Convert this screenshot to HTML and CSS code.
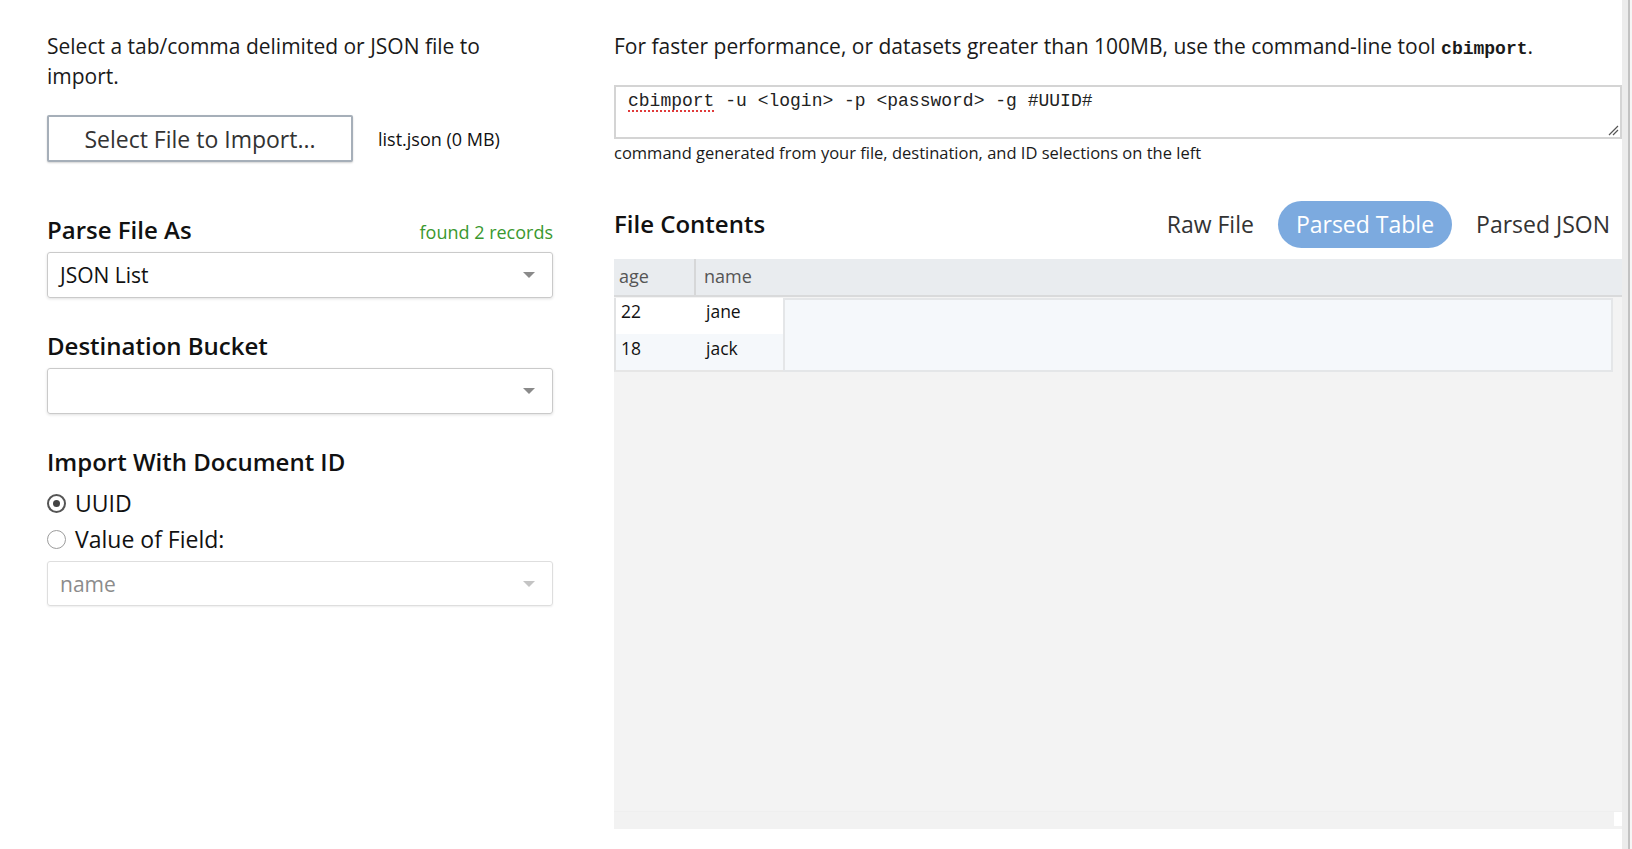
FILE: index.html
```html
<!DOCTYPE html>
<html lang="en">
<head>
<meta charset="utf-8">
<title>Import</title>
<link rel="stylesheet" href="styles.css">
</head>
<body>
<div class="page">
  <div class="main">
    <section class="left">
      <p class="intro">Select a tab/comma delimited or JSON file to import.</p>
      <div class="file-row">
        <button class="file-btn">Select File to Import...</button>
        <span class="file-name">list.json (0 MB)</span>
      </div>

      <div class="field-head first">
        <h3>Parse File As</h3>
        <span class="found">found 2 records</span>
      </div>
      <div class="select"><span>JSON List</span><span class="caret"></span></div>

      <div class="field-head">
        <h3>Destination Bucket</h3>
      </div>
      <div class="select"><span></span><span class="caret"></span></div>

      <div class="field-head">
        <h3>Import With Document ID</h3>
      </div>
      <div class="radios">
        <label class="radio"><span class="dot checked"></span>UUID</label>
        <label class="radio"><span class="dot"></span>Value of Field:</label>
      </div>
      <div class="select disabled"><span>name</span><span class="caret"></span></div>
    </section>

    <section class="right">
      <p class="perf">For faster performance, or datasets greater than 100MB, use the command-line tool <code class="tool">cbimport</code>.</p>
      <div class="cmd"><span class="cmd-text"><span class="spell">cbimport</span> -u &lt;login&gt; -p &lt;password&gt; -g #UUID#</span><svg class="grip" width="12" height="12" viewBox="0 0 12 12"><path d="M11 2 L2 11 M11 6 L6 11" stroke="#555" stroke-width="1.2" fill="none"/></svg></div>
      <div class="caption">command generated from your file, destination, and ID selections on the left</div>

      <div class="contents-head">
        <h3>File Contents</h3>
        <div class="tabs">
          <span class="tab">Raw File</span>
          <span class="tab active">Parsed Table</span>
          <span class="tab">Parsed JSON</span>
        </div>
      </div>

      <div class="grid">
        <div class="grid-header">
          <div class="hcell age">age</div>
          <div class="hcell name">name</div>
        </div>
        <div class="grid-body">
          <div class="rows">
            <div class="row"><div class="cell age">22</div><div class="cell name">jane</div></div>
            <div class="row alt"><div class="cell age">18</div><div class="cell name">jack</div></div>
          </div>
          <div class="filler"></div>
        </div>
        <div class="grid-space"></div>
        <div class="hscroll"><span class="corner"></span></div>
      </div>
    </section>
  </div>
  <div class="vscroll"></div>
</div>
</body>
</html>
```

FILE: styles.css
```css
* { box-sizing: border-box; }
html, body { margin: 0; padding: 0; background: #fff; }
body {
  font-family: "Open Sans", "Noto Sans", sans-serif;
  color: #1a1a1a;
}
.page { display: flex; width: 1632px; height: 849px; overflow: hidden; }
.main {
  flex: 1;
  display: flex;
  gap: 61px;
  padding: 31px 0 0 47px;
}
.left { width: 506px; flex: none; }
.right { flex: 1; display: flex; flex-direction: column; min-width: 0; }

.intro { margin: 0; font-size: 21px; line-height: 30px; max-width: 486px; }

.file-row { display: flex; align-items: center; gap: 25px; margin-top: 24px; }
.file-btn {
  width: 306px; height: 47px;
  border: 2px solid #a6afb9; border-radius: 2px;
  background: #fff;
  box-shadow: 0 1px 2px rgba(0,0,0,0.18);
  font-family: "Open Sans", sans-serif; font-size: 23px; color: #333;
  padding: 0;
}
.file-name { font-size: 18px; color: #111; }

h3 { margin: 0; font-size: 24px; font-weight: 600; color: #111; }
.field-head {
  display: flex; justify-content: space-between; align-items: baseline;
  height: 30px; line-height: 30px; margin-top: 33px; margin-bottom: 7px;
}
.field-head.first { margin-top: 53px; }
.found { color: #3a982f; font-size: 18px; }

.select {
  height: 46px;
  border: 1px solid #cacaca; border-radius: 3px;
  box-shadow: 0 1px 3px rgba(0,0,0,0.12);
  display: flex; align-items: center; justify-content: space-between;
  padding: 0 17px 0 12px;
  font-size: 21px; color: #111;
}
.caret {
  width: 0; height: 0;
  border-left: 6px solid transparent; border-right: 6px solid transparent;
  border-top: 6px solid #8a8a8a;
}
.select.disabled { height: 45px; margin-top: 4px; color: #8c8c8c; border-color: #dedede; box-shadow: 0 1px 2px rgba(0,0,0,0.07); }
.select.disabled .caret { border-top-color: #c4c4c4; }

.radios { margin-top: 8px; }
.radio { display: flex; align-items: center; gap: 9px; height: 36px; font-size: 23px; color: #111; }
.dot {
  width: 19px; height: 19px; border-radius: 50%; flex: none;
  border: 1.5px solid #9c9c9c; background: #fff;
  display: inline-flex; align-items: center; justify-content: center;
}
.dot.checked { border: 2px solid #555; }
.dot.checked::after { content: ""; width: 7px; height: 7px; border-radius: 50%; background: #444; }

.perf { margin: 0; font-size: 21px; line-height: 30px; height: 30px; }
.tool { font-family: "Liberation Mono", "DejaVu Sans Mono", monospace; font-weight: 700; font-size: 18px; line-height: 1; }

.cmd {
  position: relative;
  margin-top: 24px; height: 54px;
  border: 2px solid #d4d4d4;
  padding: 3px 12px 0;
  font-family: "Liberation Mono", "DejaVu Sans Mono", monospace; font-size: 18px; line-height: 22px;
  color: #222; white-space: pre;
}
.spell { text-decoration: underline dotted #e03a3a; text-decoration-thickness: 2px; text-underline-offset: 4px; }
.grip { position: absolute; right: 1px; bottom: 1px; }
.caption { margin-top: 3px; font-size: 16.5px; line-height: 22px; color: #1a1a1a; }

.contents-head { display: flex; justify-content: space-between; align-items: center; margin-top: 37px; height: 47px; }
.contents-head h3 { margin-top: -3px; }
.tabs { display: flex; gap: 5px; margin-right: -7px; }
.tab { font-size: 23px; color: #333; padding: 0 19px; height: 47px; line-height: 47px; border-radius: 24px; }
.tab.active { background: #7caadf; color: #fff; padding: 0 18px; }

.grid {
  margin-top: 11px; margin-bottom: 20px; flex: 1;
  background: #f3f3f3;
  display: flex; flex-direction: column;
}
.grid-header {
  display: flex; height: 38px; flex: none;
  background: #e9ecef; border-bottom: 2px solid #d9dadb;
  font-size: 18px; color: #555;
}
.hcell { line-height: 34px; }
.hcell.age { width: 82px; padding-left: 5px; border-right: 2px solid #d6d7d8; }
.hcell.name { padding-left: 8px; }

.grid-body { display: flex; margin-top: 1px; margin-right: 9px; }
.rows { width: 169px; border-left: 2px solid #e2e3e4; border-bottom: 2px solid #e6e6e6; }
.row { display: flex; height: 36px; background: #fff; font-size: 17.5px; color: #111; line-height: 26px; padding-top: 0; }
.row.alt { background: #f5f8fb; height: 36px; padding-top: 1px; }
.cell.age { width: 80px; padding-left: 5px; }
.cell.name { width: 87px; padding-left: 10px; }
.filler { flex: 1; background: #f5f8fb; border: 2px solid #e4e6e8; }
.grid-space { flex: 1; }
.hscroll { height: 18px; display: flex; justify-content: flex-end; border-top: 1px solid #efefef; background: #f2f2f2; }
.corner { width: 8px; height: 14px; background: #fff; }

.vscroll {
  width: 10px; flex: none;
  background: linear-gradient(to right, #ececec 0, #ececec 6px, #c2c2c2 6px, #c2c2c2 8px, #f6f6f6 8px);
}
```
